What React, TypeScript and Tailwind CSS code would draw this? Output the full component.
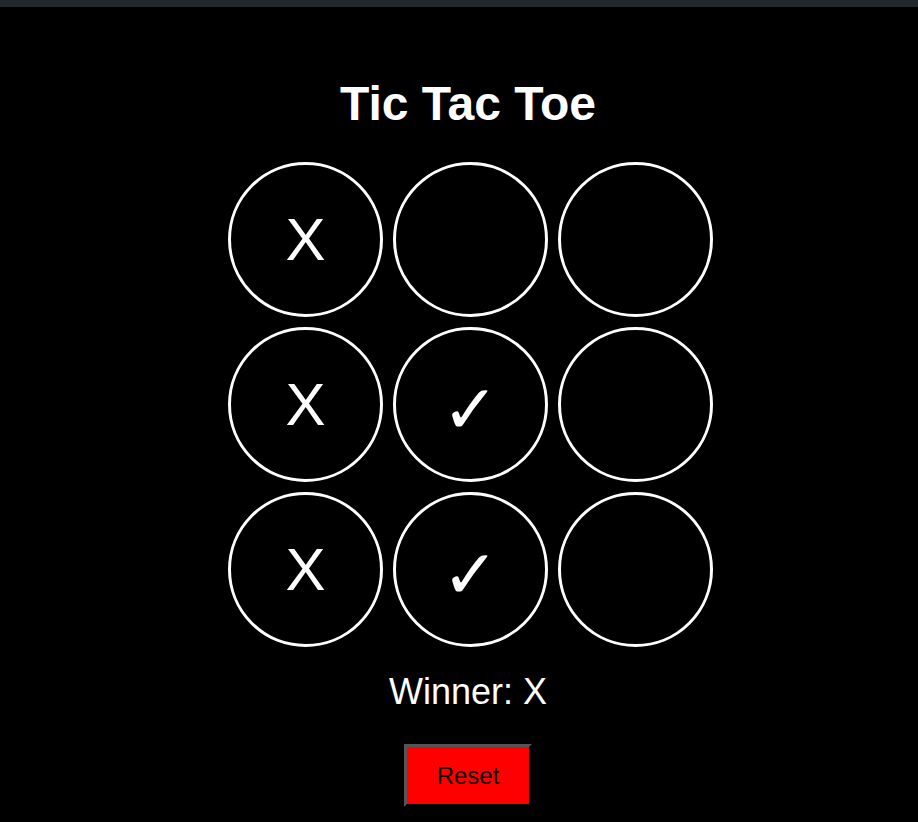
import React, { useState } from 'react';

type Mark = 'X' | '✓' | null;

const initialBoard: Mark[] = ['X', null, null, 'X', '✓', null, 'X', '✓', null];

const Cell: React.FC<{ value: Mark; onClick: () => void }> = ({ value, onClick }) => {
    return (
        <div
            onClick={onClick}
            className="w-[155px] h-[155px] rounded-full border-[3px] border-white flex items-center justify-center text-white text-[60px] leading-none cursor-pointer select-none"
        >
            {value === '✓' ? <span className="text-[68px] font-light translate-y-[5px]" style={{ fontFamily: '"DejaVu Sans", sans-serif' }}>{value}</span> : value}
        </div>
    );
};

const App: React.FC = () => {
    const [board, setBoard] = useState<Mark[]>(initialBoard);

    return (
        <div className="min-h-[822px] bg-black font-['Liberation_Sans',Arial,sans-serif] text-white">
            {/* browser chrome strip */}
            <div className="h-[7px] bg-[#23282c]" />
            <div className="flex flex-col items-center pl-[18px]">
                <h1 className="mt-[69px] text-[48px] leading-[55px] font-bold">Tic Tac Toe</h1>
                <div className="mt-[31px] ml-[5px] grid grid-cols-3 gap-[10px]">
                    {board.map((v, i) => (
                        <Cell key={i} value={v} onClick={() => {}} />
                    ))}
                </div>
                <div className="mt-[24px] text-[36px] leading-[41px]">Winner: X</div>
                <button
                    onClick={() => setBoard(Array(9).fill(null))}
                    className="mt-[32px] h-[63px] w-[128px] bg-[#ff0000] text-black text-[24px] border-[3px] border-t-[#555] border-l-[#555] border-r-black border-b-black"
                >
                    Reset
                </button>
            </div>
        </div>
    );
};

export default App;
